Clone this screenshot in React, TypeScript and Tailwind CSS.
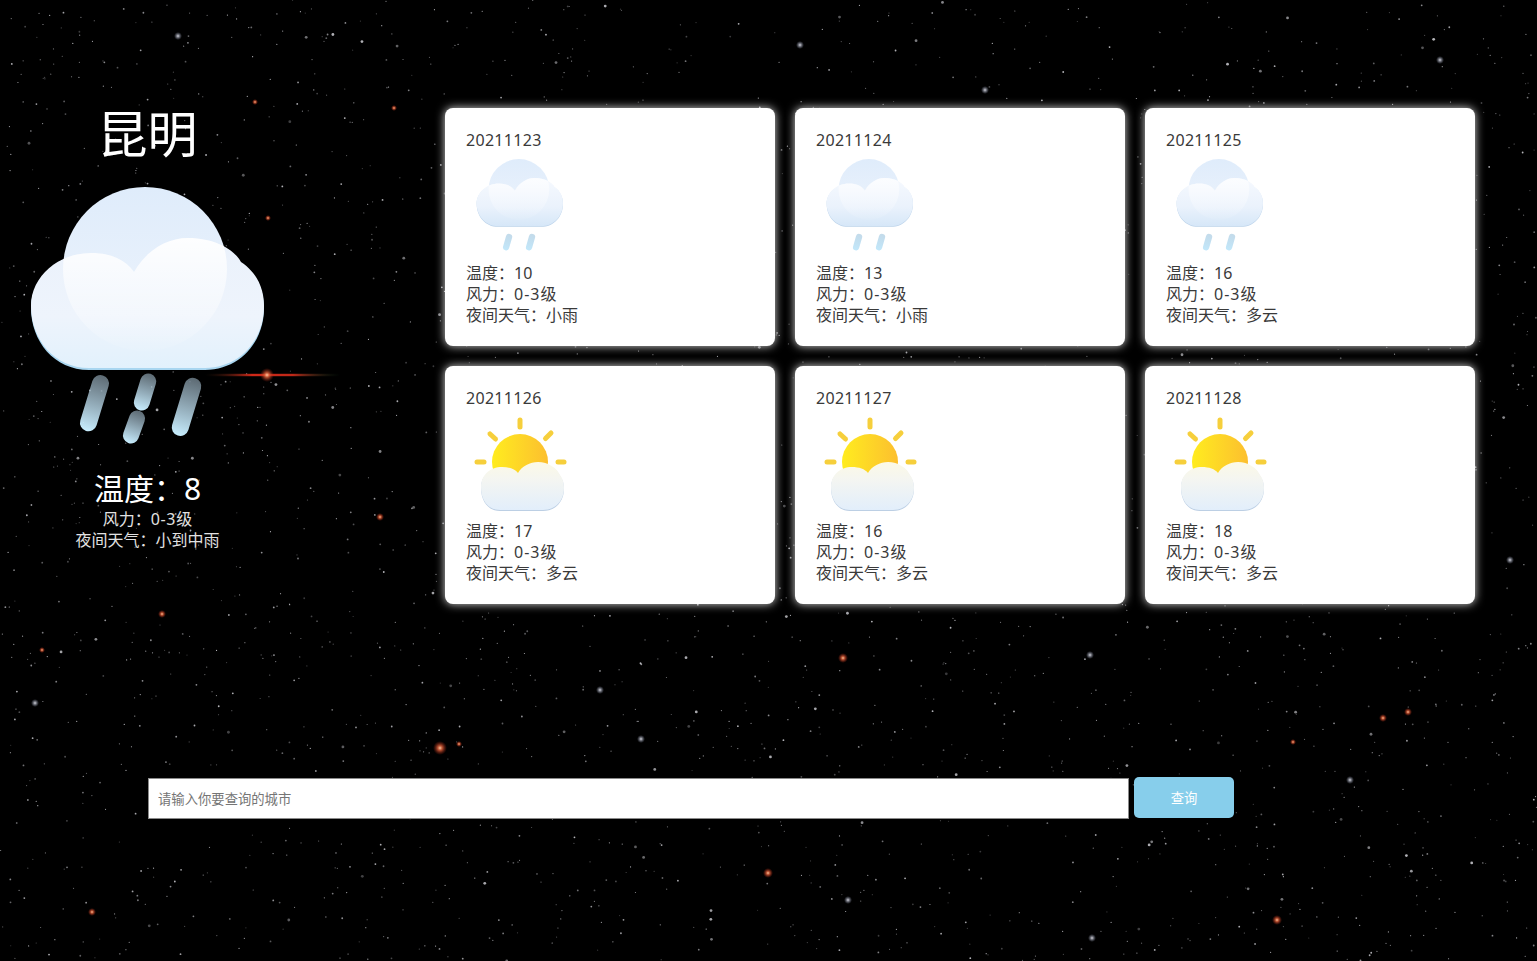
import React from 'react';

const FONT = 'font-["Noto_Sans","Noto_Sans_CJK_SC",sans-serif]';

const CLOUD =
  'M60 184C25 184 2 155 2 122C2 92 30 69 62 69C82 69 97 76 105 88C117 67 137 54 159 54C185 54 205 65 212 78C227 88 235 103 235 122C235 157 210 184 176 184Z';

// small seeded generator so the star field stays the same on each load
const makeStars = (count: number) => {
  let seed = 20211123;
  const rnd = () => {
    seed = (seed * 16807) % 2147483647;
    return seed / 2147483647;
  };
  return Array.from({ length: count }, () => {
    const big = rnd();
    return {
      x: rnd() * 1537,
      y: rnd() * 961,
      r: big > 0.96 ? 1.4 : big > 0.7 ? 0.9 : 0.6,
      o: 0.25 + rnd() * 0.55,
    };
  });
};

const stars = makeStars(3000);

const glowStars = [
  { x: 440, y: 748, r: 7 }, { x: 843, y: 658, r: 5 }, { x: 768, y: 873, r: 5 },
  { x: 1277, y: 920, r: 5 }, { x: 1383, y: 718, r: 4 }, { x: 1408, y: 712, r: 4 },
  { x: 92, y: 912, r: 4 }, { x: 42, y: 650, r: 3 }, { x: 162, y: 614, r: 4 },
  { x: 380, y: 517, r: 4 }, { x: 255, y: 102, r: 3 }, { x: 1293, y: 742, r: 3 },
  { x: 459, y: 744, r: 3 }, { x: 394, y: 108, r: 3 }, { x: 268, y: 218, r: 3 },
];

const paleStars = [
  { x: 178, y: 36 }, { x: 800, y: 45 }, { x: 848, y: 900 }, { x: 641, y: 739 },
  { x: 1092, y: 938 }, { x: 1350, y: 780 }, { x: 35, y: 703 }, { x: 1440, y: 60 },
  { x: 1090, y: 655 }, { x: 1510, y: 560 }, { x: 600, y: 690 }, { x: 985, y: 90 },
];

const StarField = () => (
  <svg className="absolute inset-0 -z-10 h-full w-full" viewBox="0 0 1537 961">
    <defs>
      <radialGradient id="redGlow">
        <stop offset="0%" stopColor="#ffc9a0" />
        <stop offset="35%" stopColor="#e0603a" stopOpacity="0.8" />
        <stop offset="100%" stopColor="#a02010" stopOpacity="0" />
      </radialGradient>
      <radialGradient id="paleGlow">
        <stop offset="0%" stopColor="#d8d8e0" />
        <stop offset="100%" stopColor="#8088a0" stopOpacity="0" />
      </radialGradient>
      <linearGradient id="flare">
        <stop offset="0%" stopColor="#302010" stopOpacity="0" />
        <stop offset="35%" stopColor="#d02818" />
        <stop offset="65%" stopColor="#c02818" />
        <stop offset="100%" stopColor="#104020" stopOpacity="0" />
      </linearGradient>
    </defs>
    {stars.map((s, i) => (
      <circle key={i} cx={s.x} cy={s.y} r={s.r} fill="#e4e4ea" opacity={s.o} />
    ))}
    {paleStars.map((s, i) => (
      <circle key={i} cx={s.x} cy={s.y} r={4} fill="url(#paleGlow)" />
    ))}
    {glowStars.map((s, i) => (
      <circle key={i} cx={s.x} cy={s.y} r={s.r} fill="url(#redGlow)" />
    ))}
    <rect x={205} y={373.8} width={135} height={2.4} fill="url(#flare)" />
    <circle cx={267} cy={375} r={7} fill="url(#redGlow)" />
  </svg>
);

const RainIcon = ({ id, big, className }: { id: string; big?: boolean; className: string }) => (
  <svg className={className} viewBox="-16 -8 270 270">
    <defs>
      <linearGradient id={`${id}-back`} x1="0" y1="0" x2="0" y2="1">
        <stop offset="0%" stopColor="#dfecfb" />
        <stop offset="100%" stopColor="#eef4fc" />
      </linearGradient>
      <linearGradient id={`${id}-front`} x1="0" y1="0" x2="0" y2="1">
        <stop offset="0%" stopColor={big ? '#eaf1fb' : '#f6f9fe'} />
        <stop offset="60%" stopColor={big ? '#eef4fc' : '#eaf2fc'} />
        <stop offset="100%" stopColor={big ? '#e2f1fc' : '#d6e7f8'} />
      </linearGradient>
      <linearGradient id={`${id}-light`} x1="0" y1="0" x2="0" y2="1">
        <stop offset="25%" stopColor="#ffffff" stopOpacity={big ? 1 : 0.7} />
        <stop offset="100%" stopColor="#ffffff" stopOpacity="0.05" />
      </linearGradient>
      <linearGradient id={`${id}-drop`} x1="0" y1="0" x2="0" y2="1">
        <stop offset="0%" stopColor="#b9d4e6" stopOpacity={big ? 0.5 : 0.85} />
        <stop offset="100%" stopColor={big ? '#c8eeff' : '#c2e8fb'} />
      </linearGradient>
      <clipPath id={`${id}-clip`}>
        <path d={CLOUD} />
      </clipPath>
    </defs>
    <circle cx="116" cy="85" r="82" fill={`url(#${id}-back)`} />
    {/* darker copy shows as the thin edge under the cloud */}
    <path d={CLOUD} fill={big ? '#a9d6f0' : '#bcd3ea'} transform="translate(0 2)" />
    <path d={CLOUD} fill={`url(#${id}-front)`} />
    <circle cx="116" cy="85" r="82" fill={`url(#${id}-light)`} clipPath={`url(#${id}-clip)`} />
    <g fill={`url(#${id}-drop)`}>
      {big ? (
        <>
          <rect x="57" y="190" width="17" height="58" rx="8.5" transform="rotate(17 65 219)" />
          <rect x="108" y="189" width="16" height="38" rx="8" transform="rotate(17 116 208)" />
          <rect x="97" y="226" width="16" height="34" rx="8" transform="rotate(20 105 243)" />
          <rect x="149" y="193" width="17" height="60" rx="8.5" transform="rotate(17 158 223)" />
        </>
      ) : (
        <>
          <rect x="77" y="204" width="17" height="46" rx="8.5" transform="rotate(16 85 227)" />
          <rect x="139" y="204" width="17" height="46" rx="8.5" transform="rotate(16 147 227)" />
        </>
      )}
    </g>
  </svg>
);

const SUN_CLOUD =
  'M30 97C18 97 11 87 11 74C11 62 20 54 32 54C39 54 45 56 48 60C52 53 60 49 68 49C78 49 87 55 90 62C93 66 94 70 94 75C94 87 86 97 73 97Z';

const SunIcon = ({ id }: { id: string }) => (
  <svg className="ml-1 mt-1 h-[100px] w-[100px]" viewBox="0 0 100 100">
    <defs>
      <linearGradient id={`${id}-sun`} x1="0" y1="0" x2="1" y2="0">
        <stop offset="0%" stopColor="#ffec1f" />
        <stop offset="100%" stopColor="#fcbf2f" />
      </linearGradient>
      <linearGradient id={`${id}-cloud`} x1="0" y1="0" x2="0" y2="1">
        <stop offset="0%" stopColor="#fcf9e6" />
        <stop offset="40%" stopColor="#f3f5f2" />
        <stop offset="100%" stopColor="#e2eefb" />
      </linearGradient>
    </defs>
    <g stroke="#f6cf3c" strokeWidth="5" strokeLinecap="round">
      <path d="M50 7V14" />
      <path d="M20 21L25.5 26" />
      <path d="M81 20L75.5 25.5" />
      <path d="M7 49H14" />
      <path d="M88 49H94" />
    </g>
    <circle cx="50" cy="49" r="28" fill={`url(#${id}-sun)`} />
    <path d={SUN_CLOUD} fill="#bccfe4" transform="translate(0 1)" />
    <path d={SUN_CLOUD} fill={`url(#${id}-cloud)`} />
  </svg>
);

const days = [
  { date: '20211123', temp: 10, night: '小雨', rain: true },
  { date: '20211124', temp: 13, night: '小雨', rain: true },
  { date: '20211125', temp: 16, night: '多云', rain: true },
  { date: '20211126', temp: 17, night: '多云', rain: false },
  { date: '20211127', temp: 16, night: '多云', rain: false },
  { date: '20211128', temp: 18, night: '多云', rain: false },
];

export default function App() {
  return (
    <div className={`relative z-0 h-[961px] overflow-hidden bg-black ${FONT}`}>
      <StarField />
      <div className="flex">
        {/* Today */}
        <div className="flex w-[295px] shrink-0 flex-col items-center pt-[102px] text-center text-white">
          <h1 className="text-[50px] font-normal leading-[64px]">昆明</h1>
          <RainIcon id="today" big className="mt-[10px] h-[270px] w-[270px] blur-[0.7px]" />
          <div className="mt-[23px] text-[30px] leading-[40px]">温度：8</div>
          <div className="text-[16px] leading-[21px] text-[#e2e2e2]">
            风力：<span className="tracking-[0.6px]">0-3</span>级
          </div>
          <div className="text-[16px] leading-[21px] text-[#e2e2e2]">夜间天气：小到中雨</div>
        </div>

        {/* Forecast */}
        <div className="ml-[150px] mt-[108px] grid grid-cols-[repeat(3,330px)] gap-5">
          {days.map((day) => (
            <div
              key={day.date}
              className="h-[238px] rounded-lg bg-white pl-[21px] pr-5 pt-[22px] text-[16px] leading-[21px] text-[#3a3a3a] shadow-[0_0_10px_rgba(255,255,255,0.85)]"
            >
              <div className="tracking-[0.3px]">{day.date}</div>
              <div className="h-[108px]">
                {day.rain ? (
                  <RainIcon id={`day-${day.date}`} className="ml-1 mt-1 h-[100px] w-[100px]" />
                ) : (
                  <SunIcon id={`day-${day.date}`} />
                )}
              </div>
              <div>温度：{day.temp}</div>
              <div>
                风力：<span className="tracking-[1px]">0-3</span>级
              </div>
              <div>夜间天气：{day.night}</div>
            </div>
          ))}
        </div>
      </div>

      {/* Search */}
      <div className="ml-[148px] mt-[173px] flex items-start">
        <input
          className="mt-px h-[41px] w-[981px] border border-[#8a8a8a] bg-white px-[9px] text-[13.33px] text-[#333] outline-none placeholder:text-[#757575]"
          placeholder="请输入你要查询的城市"
        />
        <button className="ml-[5px] h-[41px] w-[100px] rounded-[5px] bg-[#87ceeb] pt-[2px] text-[13.33px] text-white">
          查询
        </button>
      </div>
    </div>
  );
}
